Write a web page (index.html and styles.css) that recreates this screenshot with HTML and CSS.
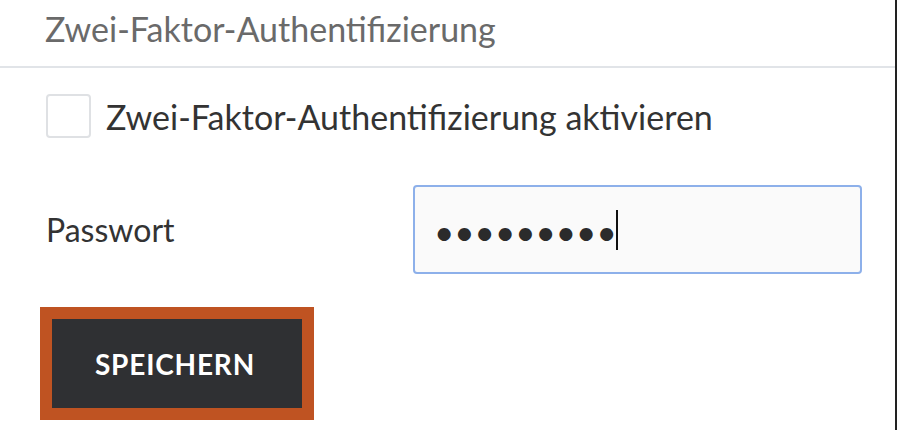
FILE: index.html
```html
<!DOCTYPE html>
<html lang="de">
<head>
<meta charset="utf-8">
<title>Zwei-Faktor-Authentifizierung</title>
<link rel="stylesheet" href="styles.css">
</head>
<body>
<div class="panel">
  <div class="panel-header">Zwei-Faktor-Authentifizierung</div>
  <div class="panel-body">
    <label class="check-row">
      <span class="checkbox"></span>
      <span class="check-label">Zwei-Faktor-Authentifizierung aktivieren</span>
    </label>
    <div class="field-row">
      <span class="field-label">Passwort</span>
      <div class="input"><span class="dots">•••••••••</span><span class="caret"></span></div>
    </div>
    <div class="actions">
      <button class="btn-save" type="button">SPEICHERN</button>
    </div>
  </div>
</div>
</body>
</html>
```
FILE: styles.css
```css
html, body {
  margin: 0;
  padding: 0;
  background: #ffffff;
}
body {
  font-family: Lato, "Open Sans", sans-serif;
  color: #333333;
  width: 897px;
  height: 430px;
  overflow: hidden;
}
.panel {
  box-sizing: border-box;
  width: 897px;
  height: 430px;
  border-right: 2px solid #222222;
}
.panel-header {
  height: 68px;
  box-sizing: border-box;
  padding: 9px 0 0 45px;
  font-size: 34px;
  line-height: 40px;
  color: #6a6a6a;
  border-bottom: 2px solid #e1e4e8;
}
.check-row {
  display: flex;
  align-items: center;
  gap: 15px;
  padding: 26px 0 0 46px;
  height: 44px;
}
.checkbox {
  box-sizing: border-box;
  width: 45px;
  height: 44px;
  border: 2px solid #dfe1e4;
  border-radius: 4px;
  background: #fff;
}
.check-label {
  font-size: 34px;
  color: #333333;
}
.field-row {
  display: flex;
  align-items: center;
  margin-top: 47px;
  padding-left: 46px;
}
.field-label {
  width: 367px;
  font-size: 32px;
  color: #333333;
}
.input {
  box-sizing: border-box;
  width: 449px;
  height: 89px;
  border: 2px solid #8db0ea;
  border-radius: 4px;
  background: #fafafa;
  display: flex;
  align-items: center;
  padding-left: 19px;
}
.dots {
  font-size: 35px;
  letter-spacing: 0;
  color: #2b2b2b;
  line-height: 40px;
  position: relative;
  top: 1px;
}
.caret {
  width: 2px;
  height: 40px;
  background: #111;
  margin-left: -1px;
}
.actions {
  padding: 33px 0 0 40px;
}
.btn-save {
  box-sizing: border-box;
  width: 274px;
  height: 113px;
  border: 12px solid #bf5322;
  background: #2f3033;
  color: #ffffff;
  font-family: Lato, "Open Sans", sans-serif;
  font-weight: 700;
  font-size: 28px;
  letter-spacing: 0.8px;
  padding: 0 4px 0 0;
  cursor: pointer;
}
```
